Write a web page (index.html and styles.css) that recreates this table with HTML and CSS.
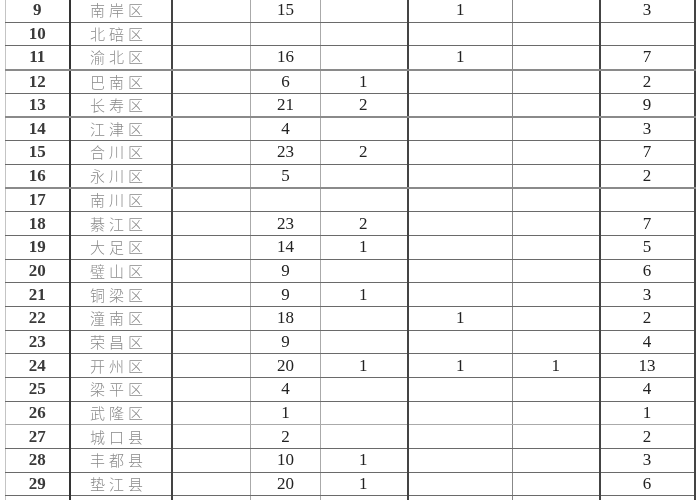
FILE: index.html
```html
<!DOCTYPE html>
<html lang="zh">
<head>
<meta charset="utf-8">
<link rel="stylesheet" href="styles.css">
</head>
<body>
<table class="grid">
<colgroup>
<col class="w-no"><col class="w-name"><col class="w-blank"><col class="w-total"><col class="w-c4"><col class="w-c5"><col class="w-c6"><col class="w-c7">
</colgroup>
<tbody>
<tr><td class="no">9</td><td class="name">南岸区</td><td class="blank"></td><td class="num">15</td><td class="c4"></td><td class="c5">1</td><td class="c6"></td><td class="c7">3</td></tr>
<tr><td class="no">10</td><td class="name">北碚区</td><td class="blank"></td><td class="num"></td><td class="c4"></td><td class="c5"></td><td class="c6"></td><td class="c7"></td></tr>
<tr class="dbl"><td class="no">11</td><td class="name">渝北区</td><td class="blank"></td><td class="num">16</td><td class="c4"></td><td class="c5">1</td><td class="c6"></td><td class="c7">7</td></tr>
<tr><td class="no">12</td><td class="name">巴南区</td><td class="blank"></td><td class="num">6</td><td class="c4">1</td><td class="c5"></td><td class="c6"></td><td class="c7">2</td></tr>
<tr class="dbl"><td class="no">13</td><td class="name">长寿区</td><td class="blank"></td><td class="num">21</td><td class="c4">2</td><td class="c5"></td><td class="c6"></td><td class="c7">9</td></tr>
<tr><td class="no">14</td><td class="name">江津区</td><td class="blank"></td><td class="num">4</td><td class="c4"></td><td class="c5"></td><td class="c6"></td><td class="c7">3</td></tr>
<tr><td class="no">15</td><td class="name">合川区</td><td class="blank"></td><td class="num">23</td><td class="c4">2</td><td class="c5"></td><td class="c6"></td><td class="c7">7</td></tr>
<tr class="dbl"><td class="no">16</td><td class="name">永川区</td><td class="blank"></td><td class="num">5</td><td class="c4"></td><td class="c5"></td><td class="c6"></td><td class="c7">2</td></tr>
<tr><td class="no">17</td><td class="name">南川区</td><td class="blank"></td><td class="num"></td><td class="c4"></td><td class="c5"></td><td class="c6"></td><td class="c7"></td></tr>
<tr><td class="no">18</td><td class="name">綦江区</td><td class="blank"></td><td class="num">23</td><td class="c4">2</td><td class="c5"></td><td class="c6"></td><td class="c7">7</td></tr>
<tr><td class="no">19</td><td class="name">大足区</td><td class="blank"></td><td class="num">14</td><td class="c4">1</td><td class="c5"></td><td class="c6"></td><td class="c7">5</td></tr>
<tr><td class="no">20</td><td class="name">璧山区</td><td class="blank"></td><td class="num">9</td><td class="c4"></td><td class="c5"></td><td class="c6"></td><td class="c7">6</td></tr>
<tr><td class="no">21</td><td class="name">铜梁区</td><td class="blank"></td><td class="num">9</td><td class="c4">1</td><td class="c5"></td><td class="c6"></td><td class="c7">3</td></tr>
<tr><td class="no">22</td><td class="name">潼南区</td><td class="blank"></td><td class="num">18</td><td class="c4"></td><td class="c5">1</td><td class="c6"></td><td class="c7">2</td></tr>
<tr><td class="no">23</td><td class="name">荣昌区</td><td class="blank"></td><td class="num">9</td><td class="c4"></td><td class="c5"></td><td class="c6"></td><td class="c7">4</td></tr>
<tr><td class="no">24</td><td class="name">开州区</td><td class="blank"></td><td class="num">20</td><td class="c4">1</td><td class="c5">1</td><td class="c6">1</td><td class="c7">13</td></tr>
<tr><td class="no">25</td><td class="name">梁平区</td><td class="blank"></td><td class="num">4</td><td class="c4"></td><td class="c5"></td><td class="c6"></td><td class="c7">4</td></tr>
<tr class="light"><td class="no">26</td><td class="name">武隆区</td><td class="blank"></td><td class="num">1</td><td class="c4"></td><td class="c5"></td><td class="c6"></td><td class="c7">1</td></tr>
<tr><td class="no">27</td><td class="name">城口县</td><td class="blank"></td><td class="num">2</td><td class="c4"></td><td class="c5"></td><td class="c6"></td><td class="c7">2</td></tr>
<tr><td class="no">28</td><td class="name">丰都县</td><td class="blank"></td><td class="num">10</td><td class="c4">1</td><td class="c5"></td><td class="c6"></td><td class="c7">3</td></tr>
<tr><td class="no">29</td><td class="name">垫江县</td><td class="blank"></td><td class="num">20</td><td class="c4">1</td><td class="c5"></td><td class="c6"></td><td class="c7">6</td></tr>
<tr><td class="no"></td><td class="name"></td><td class="blank"></td><td class="num"></td><td class="c4"></td><td class="c5"></td><td class="c6"></td><td class="c7"></td></tr>
</tbody>
</table>
</body>
</html>
```
FILE: styles.css
```css
html, body {
  margin: 0;
  padding: 0;
  background: #ffffff;
  overflow: hidden;
}

.grid {
  border-collapse: collapse;
  table-layout: fixed;
  width: 689px;
  margin: -2px 0 0 5px;
  font-family: "Liberation Serif", "Times New Roman", serif;
  color: #222;
  filter: blur(0.3px);
}

.w-no { width: 64px; }
.w-name { width: 102px; }
.w-blank { width: 79px; }
.w-total { width: 70px; }
.w-c4 { width: 87px; }
.w-c5 { width: 105px; }
.w-c6 { width: 87px; }
.w-c7 { width: 95px; }

.grid tr {
  height: 23.7px;
}

.grid td {
  padding: 0;
  border-top: 1px solid #6a6a6a;
  border-bottom: 1px solid #6a6a6a;
  border-left: 1px solid #9a9a9a;
  border-right: 1px solid #9a9a9a;
  text-align: center;
  vertical-align: middle;
  font-size: 17px;
  line-height: 20px;
}

.grid tr.dbl td {
  border-bottom: 2px solid #8a8a8a;
}

.grid tr.light td {
  border-bottom: 1px solid #aaaaaa;
}

.grid td.no {
  font-weight: bold;
  color: #3a3a3a;
  border-left: 1px solid #c4c4c4;
  border-right: 2px solid #333;
}

.grid td.name {
  font-family: "Noto Sans CJK SC", "Noto Sans CJK TC", sans-serif;
  font-weight: 300;
  font-size: 15px;
  letter-spacing: 4px;
  text-indent: -4px;
  color: #8a8a8a;
  border-right: 2px solid #444;
}

.grid td.blank {
  border-right: 1px solid #aaaaaa;
}

.grid td.num {
  border-right: 1px solid #aaaaaa;
}

.grid td.c4 {
  text-align: left;
  padding-left: 38px;
  border-right: 2px solid #444;
}

.grid td.c5 {
  border-right: 1px solid #888;
}

.grid td.c6 {
  border-right: 2px solid #444;
}

.grid td.c7 {
  border-right: 2px solid #444;
}
```
